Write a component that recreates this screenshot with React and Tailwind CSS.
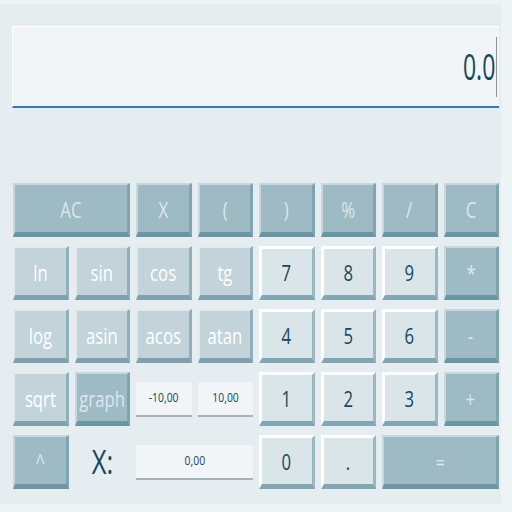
import { useState } from 'react'

const styles = {
  dark: 'bg-[#9ebac4] text-[#dce8ec] border-t-2 border-l-2 border-t-[#c6d7dd] border-l-[#c6d7dd] border-r-[3px] border-r-[#7fa5b1] border-b-[5px] border-b-[#6b96a4]',
  mid: 'bg-[#c2d3d9] text-white border-t-2 border-l-2 border-t-[#e2eaee] border-l-[#e2eaee] border-r-[3px] border-r-[#8eb0bb] border-b-[5px] border-b-[#7da1ad]',
  num: 'bg-[#dae5ea] text-[#17475c] border-t-[3px] border-l-[3px] border-t-white border-l-white border-r-[3px] border-r-[#9ab8c1] border-b-[5px] border-b-[#82a6b2]',
}

function Key({ label, kind = 'dark', span = '' }) {
  return (
    <button className={`h-[54px] flex items-center justify-center ${styles[kind]} ${span}`}>
      <span className="inline-block scale-x-[0.76] text-[22px] leading-none">{label}</span>
    </button>
  )
}

function SmallInput({ value, span = '' }) {
  return (
    <div className={`self-center h-[35px] bg-[#f1f5f8] border-b-2 border-b-[#a9b1b4] flex items-center justify-center ${span}`}>
      <span className="inline-block scale-x-[0.8] text-[13px] text-[#17475c]">{value}</span>
    </div>
  )
}

export default function App() {
  const [display] = useState('0.0')
  return (
    <div className="w-[512px] h-[512px] bg-[#eef3f5] pt-1 pr-3 pb-2 flex" style={{ fontFamily: '"Open Sans", sans-serif' }}>
      <div className="flex-1 bg-[#e5edf0] pt-[22px] pl-3 pr-[2px] flex flex-col">
        <div className="h-[82px] bg-[#f1f5f8] border-t border-l border-white border-b-2 border-b-[#2b7bc0] flex items-center justify-end pr-[2px]">
          <span className="inline-block origin-right scale-x-[0.64] text-[36px] leading-none text-[#17475c] pr-[1px] border-r border-r-[#555] py-[12px]">{display}</span>
        </div>
        <div className="mt-[75px] ml-[1px] w-[486px] grid grid-cols-8 gap-x-[6px] gap-y-[9px]">
          <Key label="AC" span="col-span-2" />
          <Key label="X" />
          <Key label="(" />
          <Key label=")" />
          <Key label="%" />
          <Key label="/" />
          <Key label="C" />

          <Key label="ln" kind="mid" />
          <Key label="sin" kind="mid" />
          <Key label="cos" kind="mid" />
          <Key label="tg" kind="mid" />
          <Key label="7" kind="num" />
          <Key label="8" kind="num" />
          <Key label="9" kind="num" />
          <Key label="*" />

          <Key label="log" kind="mid" />
          <Key label="asin" kind="mid" />
          <Key label="acos" kind="mid" />
          <Key label="atan" kind="mid" />
          <Key label="4" kind="num" />
          <Key label="5" kind="num" />
          <Key label="6" kind="num" />
          <Key label="-" />

          <Key label="sqrt" kind="mid" />
          <Key label="graph" />
          <SmallInput value="-10,00" />
          <SmallInput value="10,00" />
          <Key label="1" kind="num" />
          <Key label="2" kind="num" />
          <Key label="3" kind="num" />
          <Key label="+" />

          <Key label="^" />
          <div className="flex items-center justify-center">
            <span className="inline-block scale-x-[0.8] text-[32px] leading-none text-[#17475c]">X:</span>
          </div>
          <SmallInput value="0,00" span="col-span-2" />
          <Key label="0" kind="num" />
          <Key label="." kind="num" />
          <Key label="=" span="col-span-2" />
        </div>
      </div>
    </div>
  )
}
